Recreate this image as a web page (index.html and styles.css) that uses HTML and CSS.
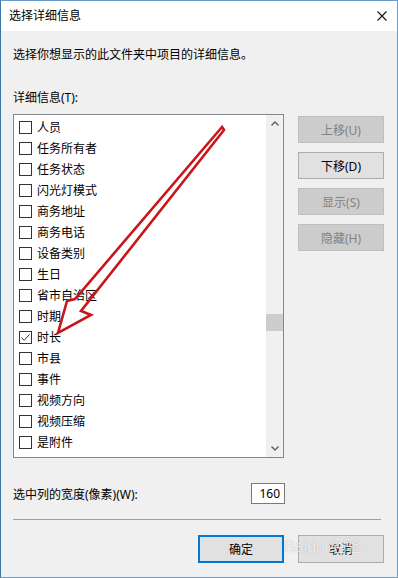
FILE: index.html
```html
<!DOCTYPE html>
<html lang="zh-CN">
<head>
  <meta charset="UTF-8">
  <meta name="viewport" content="width=device-width, initial-scale=1.0">
  <title>选择详细信息</title>
  <link rel="stylesheet" href="styles.css">
</head>
<body>
  <div class="window">
    <div class="titlebar">
      <span class="title">选择详细信息</span>
      <svg class="close" width="10" height="10" viewBox="0 0 10 10">
        <path d="M0.5 0.5 L9.5 9.5 M9.5 0.5 L0.5 9.5" stroke="#111" stroke-width="1.1" fill="none"/>
      </svg>
    </div>

    <div class="content">
      <p class="desc">选择你想显示的此文件夹中项目的详细信息。</p>
      <p class="label">详细信息(T):</p>

      <div class="main">
        <div class="listbox">
          <ul class="items">
            <li><span class="check"></span>人员</li>
            <li><span class="check"></span>任务所有者</li>
            <li><span class="check"></span>任务状态</li>
            <li><span class="check"></span>闪光灯模式</li>
            <li><span class="check"></span>商务地址</li>
            <li><span class="check"></span>商务电话</li>
            <li><span class="check"></span>设备类别</li>
            <li><span class="check"></span>生日</li>
            <li><span class="check"></span>省市自治区</li>
            <li><span class="check"></span>时期</li>
            <li>
              <span class="check checked">
                <svg width="11" height="11" viewBox="0 0 11 11"><path d="M1.5 5.5 L4.2 8.3 L9.6 2.4" stroke="#333" stroke-width="1" fill="none"/></svg>
              </span>时长
            </li>
            <li><span class="check"></span>市县</li>
            <li><span class="check"></span>事件</li>
            <li><span class="check"></span>视频方向</li>
            <li><span class="check"></span>视频压缩</li>
            <li><span class="check"></span>是附件</li>
          </ul>
          <div class="scrollbar">
            <span class="arrow">
              <svg width="8" height="5" viewBox="0 0 8 5"><path d="M0.5 4.5 L4 1 L7.5 4.5" stroke="#606060" stroke-width="1.4" fill="none"/></svg>
            </span>
            <div class="track"><div class="thumb"></div></div>
            <span class="arrow">
              <svg width="8" height="5" viewBox="0 0 8 5"><path d="M0.5 0.5 L4 4 L7.5 0.5" stroke="#606060" stroke-width="1.4" fill="none"/></svg>
            </span>
          </div>
        </div>

        <div class="side-buttons">
          <button class="btn" disabled>上移(U)</button>
          <button class="btn">下移(D)</button>
          <button class="btn" disabled>显示(S)</button>
          <button class="btn" disabled>隐藏(H)</button>
        </div>
      </div>

      <div class="width-row">
        <span>选中列的宽度(像素)(W):</span>
        <span class="num-input">160</span>
      </div>

      <hr class="separator">

      <div class="footer">
        <button class="btn primary">确定</button>
        <button class="btn">取消</button>
      </div>
    </div>

    <!-- red annotation arrow drawn over the dialog -->
    <svg class="annotation" width="398" height="578" viewBox="0 0 398 578">
      <path d="M222 127 L75 299 L67 301 L58 333 L91 315 L81 311 L224 130 Z" stroke="#c8161b" stroke-width="2.6" fill="none" stroke-linejoin="miter"/>
    </svg>

    <div class="watermark">Bai<span class="paw">du</span>经验</div>
  </div>
</body>
</html>
```

FILE: styles.css
```css
* {
  box-sizing: border-box;
}
body {
  margin: 0;
  font-family: "Noto Sans", "Noto Sans CJK SC", sans-serif;
  font-size: 12px;
  color: #000;
}
.window {
  position: relative;
  width: 398px;
  height: 578px;
  background: #f0f0f0;
  border: 1px solid #6a9cc6;
  border-left-color: #3a78aa;
  overflow: hidden;
}
.titlebar {
  height: 30px;
  background: #fff;
  display: flex;
  align-items: center;
  justify-content: space-between;
  padding: 0 10px 0 8px;
}
.title {
  line-height: 16px;
}
.close {
  display: block;
}
.content {
  padding: 0 13px 0 12px;
}
.desc {
  margin: 16px 0 0;
  line-height: 16px;
}
.label {
  margin: 27px 0 0;
  line-height: 16px;
}
.main {
  display: flex;
  margin-top: 8px;
}
.listbox {
  width: 271px;
  height: 344px;
  background: #fff;
  border: 1px solid #828790;
  display: flex;
}
.items {
  flex: 1;
  list-style: none;
  margin: 0;
  padding: 2px 0 0 5px;
}
.items li {
  height: 21px;
  display: flex;
  align-items: center;
  line-height: 16px;
}
.check {
  width: 13px;
  height: 13px;
  border: 1px solid #333;
  background: #fff;
  margin-right: 5px;
  display: flex;
  align-items: center;
  justify-content: center;
}
.check.checked svg {
  display: block;
}
.scrollbar {
  width: 17px;
  background: #f0f0f0;
  display: flex;
  flex-direction: column;
}
.arrow {
  height: 17px;
  display: flex;
  align-items: center;
  justify-content: center;
}
.track {
  flex: 1;
}
.thumb {
  height: 17px;
  margin-top: 182px;
  background: #cdcdcd;
}
.side-buttons {
  margin-left: 14px;
  padding-top: 2px;
  display: flex;
  flex-direction: column;
  gap: 9px;
}
.btn {
  width: 86px;
  height: 27px;
  font-family: inherit;
  font-size: 12px;
  color: #000;
  background: #e1e1e1;
  border: 1px solid #adadad;
  padding: 0;
}
.btn:disabled {
  background: #cccccc;
  border-color: #bfbfbf;
  color: #838383;
}
.width-row {
  margin-top: 25px;
  display: flex;
  align-items: center;
  justify-content: space-between;
  width: 272px;
}
.num-input {
  width: 34px;
  height: 21px;
  background: #fff;
  border: 1px solid #7a7a7a;
  text-align: right;
  padding-right: 4px;
  line-height: 19px;
}
.separator {
  margin: 15px 3px 0 0;
  border: none;
  border-top: 1px solid #a0a0a0;
  height: 0;
}
.footer {
  margin-top: 15px;
  display: flex;
  justify-content: flex-end;
  gap: 14px;
}
.footer .btn {
  height: 28px;
}
.btn.primary {
  border: 2px solid #0078d7;
}
.annotation {
  position: absolute;
  top: -1px;
  left: -1px;
  pointer-events: none;
}
.watermark {
  position: absolute;
  left: 283px;
  top: 537px;
  font-family: "Liberation Sans", "Noto Sans CJK SC", sans-serif;
  font-size: 16px;
  line-height: 18px;
  color: rgba(255, 255, 255, 0.8);
  text-shadow: 0 0 1px rgba(120, 120, 120, 0.6);
  pointer-events: none;
}
.watermark .paw {
  margin-right: 4px;
}
```
